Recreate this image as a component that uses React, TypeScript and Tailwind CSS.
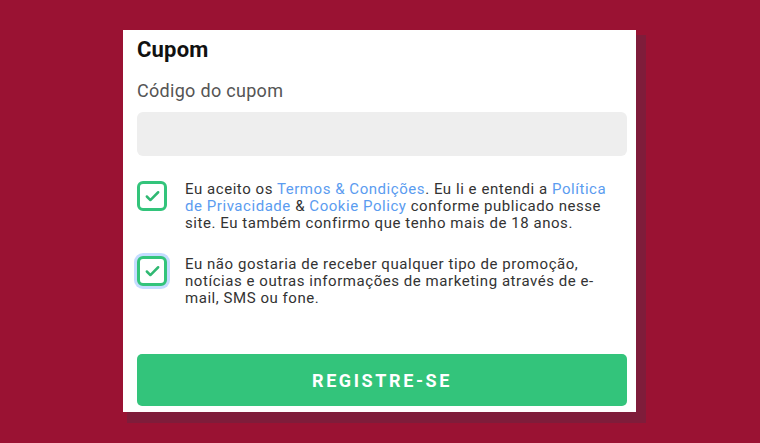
import { Check } from "lucide-react";

function Checkbox({ focused }: { focused?: boolean }) {
  return (
    <span
      className={
        "flex h-[30px] w-[30px] shrink-0 items-center justify-center rounded-[6px] border-[3px] border-[#33c47b] bg-white " +
        (focused ? "shadow-[0_0_0_3px_rgba(140,185,255,0.5)]" : "")
      }
    >
      <Check className="h-[17px] w-[17px] text-[#2fb872]" strokeWidth={3.5} />
    </span>
  );
}

export default function App() {
  return (
    <div className="h-[443px] w-[760px] overflow-hidden bg-[#9a1233] pl-[123px] pt-[30px] font-['Roboto',sans-serif]">
      <div className="w-[513px] bg-white pb-[6px] pl-[14px] pr-[9px] shadow-[7px_8px_0_3px_#7f1c3a]">
        <h1 className="pt-[6px] text-[22px] font-bold leading-[28px] tracking-[0.2px] text-[#111]">Cupom</h1>
        <label className="mt-[16px] block text-[18px] leading-[22px] tracking-[0.3px] text-[#555]">Código do cupom</label>
        <div className="mt-[10px] h-[44px] w-full rounded-[6px] bg-[#eeeeee]" />
        <div className="mt-[25px] flex gap-[18px]">
          <Checkbox />
          <p className="text-[15px] leading-[17px] tracking-[0.55px] text-[#333]">
            Eu aceito os <span className="text-[#5b9cf0]">Termos &amp; Condições</span>. Eu li e entendi a{" "}
            <span className="text-[#5b9cf0]">Política</span>
            <br />
            <span className="text-[#5b9cf0]">de Privacidade</span> &amp;{" "}
            <span className="text-[#5b9cf0]">Cookie Policy</span> conforme publicado nesse
            <br />
            site. Eu também confirmo que tenho mais de 18 anos.
          </p>
        </div>
        <div className="mt-[24px] flex gap-[18px]">
          <Checkbox focused />
          <p className="text-[15px] leading-[17px] tracking-[0.55px] text-[#333]">
            Eu não gostaria de receber qualquer tipo de promoção,
            <br />
            notícias e outras informações de marketing através de e-
            <br />
            mail, SMS ou fone.
          </p>
        </div>
        <button
          type="button"
          className="mt-[47px] flex h-[52px] w-full items-center justify-center rounded-[5px] bg-[#33c47b] text-[18px] font-bold tracking-[2.6px] text-white"
        >
          REGISTRE-SE
        </button>
      </div>
    </div>
  );
}
